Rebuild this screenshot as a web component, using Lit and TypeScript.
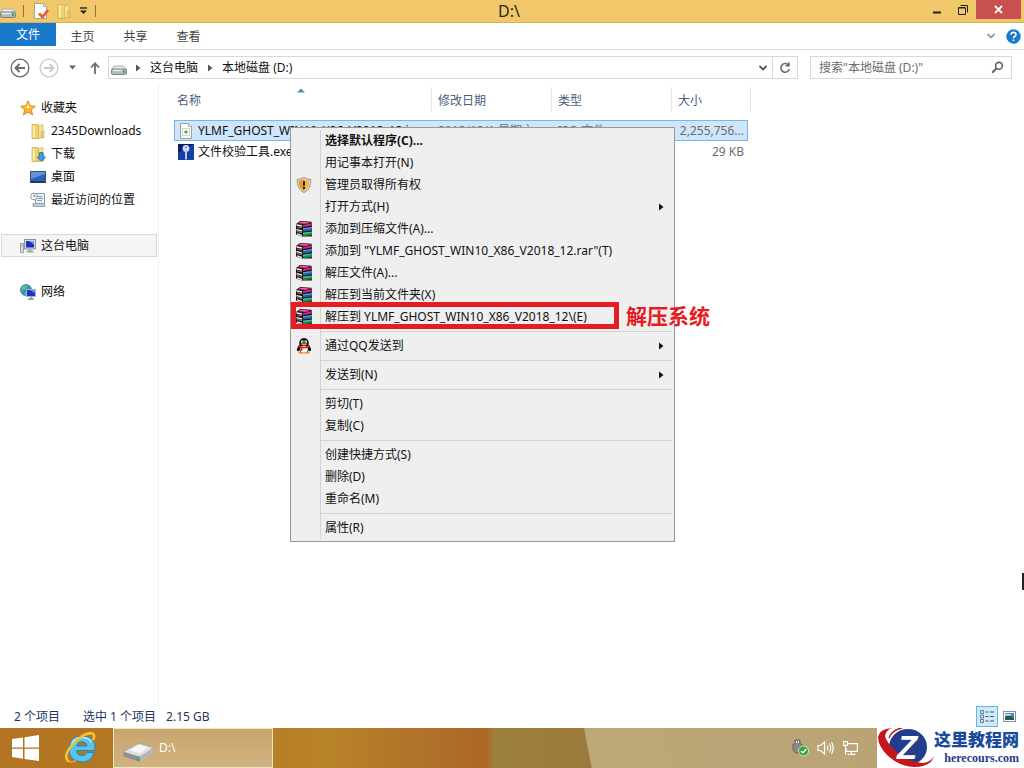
import { LitElement, html, css, svg, nothing } from "lit";
import { customElement } from "lit/decorators.js";
import { classMap } from "lit/directives/class-map.js";

const drive = svg`
  <path d="M3 6h9.500l3 3.500H.5z" fill="#e9eaeb" stroke="#a3a6a8" stroke-width=".8"/>
  <rect x=".5" y="9" width="15" height="5.500" rx="1.400" fill="#b5b9bc" stroke="#777b7e" stroke-width=".9"/>
  <path d="M2 10.500h9" stroke="#eef0f1" stroke-width="1.300"/>
  <rect x="12" y="10.500" width="2" height="2.500" fill="#2fae5a"/>`;
const folder = svg`
  <path d="M2 1.500h6l1 1.500v12.500H2z" fill="#f0d26c" stroke="#cda446" stroke-width=".7"/>
  <path d="M3.800 2.500v12" stroke="#fbeeb4" stroke-width="2"/>
  <path d="M8.500 3l4.500-1.500v12.200L8.500 15.500z" fill="#f8e394" stroke="#cfae54" stroke-width=".7"/>
  <path d="M11 8.500l3-.5v7h-3z" fill="#e9c862" stroke="#cda446" stroke-width=".5"/>`;
const monitor = svg`
  <rect x="4.500" y="1.500" width="11" height="9.500" fill="#d8dce2" stroke="#8a93a0"/>
  <rect x="6" y="3" width="8" height="6.500" fill="#1a31b8"/>
  <path d="M9 3h5v3.500z" fill="#7d9cf0"/>
  <path d="M8.500 11.500h3v1.500h2v1.500h-7V13h2z" fill="#9ba3ad"/>`;

const icons: Record<string, unknown> = {
  drive,
  folder,
  check: svg`
    <path d="M1.500.5h9l3 3v12h-12z" fill="#fff" stroke="#9a9a9a" stroke-width=".9"/>
    <path d="M10.500.5v3h3" fill="#e6e6e6" stroke="#9a9a9a" stroke-width=".8"/>
    <path d="M6 10.500l3.500 3.500L15 7" fill="none" stroke="#e0633c" stroke-width="2.800"/>`,
  star: svg`<path d="M8 .8l2.100 4.900 5.300.5-4 3.500 1.200 5.200L8 12.200l-4.600 2.700 1.200-5.200-4-3.500 5.300-.5z" fill="#fbb631" stroke="#dc8425" stroke-width=".9"/>
    <path d="M8 3l1.300 3.600 3 .5L8 8.500 5 6.900l1.700-.3z" fill="#ffe38b"/>`,
  download: svg`${folder}<path d="M9.500 6.500h3.500V11h2.500l-4.200 4.600L7 11h2.500z" fill="#3ba0e6" stroke="#1c6eb4" stroke-width=".8"/>`,
  desktop: svg`<rect x=".5" y="2.500" width="15" height="11" fill="#2b62b8" stroke="#3b4f6e"/>
    <path d="M1 3h14v2L1 10z" fill="#5e95dd"/><path d="M1 13h14" stroke="#1c2f50" stroke-width="1.500"/>`,
  recent: svg`<path d="M5.500 1.500h9v10h-9z" fill="#eef2f6" stroke="#8e9aa6"/>
    <path d="M7 4.500h5M8 6.500h5M7 8.500h5" stroke="#7b9cc0"/>
    <path d="M3 11.500h12v3H3z" fill="#c4ccd4" stroke="#8e9aa6" stroke-width=".8"/>
    <circle cx="4" cy="4.500" r="3.400" fill="#f6f8fa" stroke="#8c97a3"/><path d="M4 2.500v2h1.600" fill="none" stroke="#5c6670" stroke-width=".9"/>`,
  computer: svg`<rect x=".5" y="5.500" width="3" height="9" fill="#d5d9dd" stroke="#8d949b" stroke-width=".8"/>
    <path d="M1.500 7.500h1" stroke="#42a84d"/>${monitor}`,
  network: svg`<circle cx="6" cy="6" r="5.500" fill="#2f8fd4" stroke="#1f6ea9" stroke-width=".7"/>
    <path d="M2 3q3-3 6-1L6 5 3 6 1 8zM4 8l3 1-1 2.200z" fill="#69c06a"/>
    <rect x="6.500" y="5.500" width="9" height="7" fill="#1b37c0" stroke="#aab3c0"/><path d="M10 6h5v3z" fill="#6f93ee"/>
    <path d="M10 13h2v1.500H8.500v1h5v-1" fill="#9ba3ad" stroke="#858d98" stroke-width=".7"/>`,
  iso: svg`<path d="M2.500.5h8l3 3v12h-11z" fill="#fdfdfd" stroke="#9b9b9b"/><path d="M10.500.5v3h3" fill="#eee" stroke="#9b9b9b" stroke-width=".7"/>
    <rect x="4.500" y="5.500" width="7" height="7" fill="#fff" stroke="#c3cbc3" stroke-width=".8"/>
    <path d="M8 7.200v3.600M6.200 9h3.600" stroke="#3fa648" stroke-width="1.400"/>`,
  key: svg`<rect width="16" height="16" fill="#173fa6"/><path d="M0 0h16L0 9z" fill="#0a1c66"/>
    <circle cx="8" cy="4.500" r="3.400" fill="#cfdcff"/><circle cx="8" cy="3.400" r=".8" fill="#4c67bf"/>
    <path d="M7 7h2v8.500H7z" fill="#b7c8fb"/>`,
  shield: svg`<path d="M8 .5q3 1.800 6.800 1.800Q15.300 12 8 15.600.7 12 1.200 2.300 5 2.300 8 .5z" fill="#d9d9d4" stroke="#85857d" stroke-width=".8"/>
    <path d="M8 2.200q2.500 1.400 5.200 1.500Q13.200 11 8 13.900 2.800 11 2.800 3.700 5.500 3.600 8 2.200z" fill="#f5b431"/>
    <path d="M8 2.200v11.700Q2.800 11 2.800 3.700 5.500 3.600 8 2.200z" fill="#e89a20"/>
    <path d="M8 4.200v4.600M8 10v2" stroke="#2c1d08" stroke-width="2"/>`,
  rar: svg`<path d="M4 0l11.500.8.5 4.200-.5 1 .5 4-.5 1 .5 4.500H6L0 13.500V9.800l1-.8-1-1V4.800L1 4 0 3z" fill="#1d1418"/>
    <path d="M4 .5l11 .8-4 2.200L1.500 2.200z" fill="#c21f74"/><path d="M4.500 1l7 .6-2 .9-6-.8z" fill="#e974b2"/>
    <path d="M7 4.200l8.500-1.800v2.200L7 6z" fill="#d0258a"/>
    <path d="M1 3.200l5 1v1.500l-5-1z" fill="#f3efe6"/><path d="M1 5.400l5 1v.8L1 6.300z" fill="#a49d94"/>
    <path d="M7 7.200l8.500-1v3.300L7 10.500z" fill="#1b66b0"/><path d="M7 7.200l8.500-1v1L7 8.200z" fill="#62a9dd"/>
    <path d="M1 8l5 1.200v1.500L1 9.300z" fill="#f3efe6"/><path d="M1 10l5 1.300v.8L1 10.900z" fill="#a49d94"/>
    <path d="M7 11.800l8.500-1v3.500L7 15.200z" fill="#178a50"/><path d="M7 11.800l8.500-1v1L7 12.900z" fill="#5cc990"/>
    <path d="M1 12.300l5 1.400v1.500l-5-1.700z" fill="#f3efe6"/>`,
  qq: svg`<ellipse cx="3.200" cy="10" rx="1.700" ry="3.500" transform="rotate(28 3.200 10)" fill="#111"/>
    <ellipse cx="12.800" cy="10" rx="1.700" ry="3.500" transform="rotate(-28 12.800 10)" fill="#111"/>
    <ellipse cx="5.200" cy="14.700" rx="3" ry="1.200" fill="#f4a31c"/><ellipse cx="10.800" cy="14.700" rx="3" ry="1.200" fill="#f4a31c"/>
    <ellipse cx="8" cy="10" rx="5.300" ry="5" fill="#111"/><ellipse cx="8" cy="5" rx="4.800" ry="4.900" fill="#111"/>
    <ellipse cx="8" cy="11.200" rx="3.800" ry="3.500" fill="#fff"/>
    <ellipse cx="6.300" cy="3.900" rx="1.300" ry="1.700" fill="#fff"/><ellipse cx="9.700" cy="3.900" rx="1.300" ry="1.700" fill="#fff"/>
    <circle cx="6.700" cy="4.200" r=".6"/><circle cx="9.300" cy="4.200" r=".6"/>
    <ellipse cx="8" cy="6.400" rx="2.700" ry=".9" fill="#f7a71c"/>
    <path d="M3 7.600Q8 10 13 7.600l.2 1.900Q8 11.600 2.800 9.500z" fill="#e32222"/><path d="M4.500 9.800l2 .5-.2 2.600-1.800-.3z" fill="#e32222"/>`,
};

const icon = (name: string) =>
  html`<svg class="icon" viewBox="0 0 16 16" width="16" height="16" aria-hidden="true">${icons[name]}</svg>`;
const chevron = html`<svg width="10" height="8" viewBox="0 0 10 8" aria-hidden="true"><path d="M1.500 2L5 5.500 8.500 2" fill="none" stroke="currentColor" stroke-width="1.800"/></svg>`;
const triangle = html`<svg width="5" height="8" viewBox="0 0 5 8" aria-hidden="true"><path d="M0 .5L4.500 4 0 7.500z" fill="currentColor"/></svg>`;

interface MenuEntry {
  label: string;
  icon?: string;
  bold?: boolean;
  submenu?: boolean;
  note?: string;
}

const menuGroups: MenuEntry[][] = [
  [
    { label: "选择默认程序(C)...", bold: true },
    { label: "用记事本打开(N)" },
    { label: "管理员取得所有权", icon: "shield" },
    { label: "打开方式(H)", submenu: true },
    { label: "添加到压缩文件(A)...", icon: "rar" },
    { label: '添加到 "YLMF_GHOST_WIN10_X86_V2018_12.rar"(T)', icon: "rar" },
    { label: "解压文件(A)...", icon: "rar" },
    { label: "解压到当前文件夹(X)", icon: "rar" },
    { label: "解压到 YLMF_GHOST_WIN10_X86_V2018_12\\(E)", icon: "rar", note: "解压系统" },
  ],
  [{ label: "通过QQ发送到", icon: "qq", submenu: true }],
  [{ label: "发送到(N)", submenu: true }],
  [{ label: "剪切(T)" }, { label: "复制(C)" }],
  [{ label: "创建快捷方式(S)" }, { label: "删除(D)" }, { label: "重命名(M)" }],
  [{ label: "属性(R)" }],
];

const places = [
  [
    { label: "收藏夹", icon: "star" },
    { label: "2345Downloads", icon: "folder", child: true },
    { label: "下载", icon: "download", child: true },
    { label: "桌面", icon: "desktop", child: true },
    { label: "最近访问的位置", icon: "recent", child: true },
  ],
  [{ label: "这台电脑", icon: "computer", current: true }],
  [{ label: "网络", icon: "network" }],
] as { label: string; icon: string; child?: boolean; current?: boolean }[][];

const files = [
  { name: "YLMF_GHOST_WIN10_X86_V2018_12.iso", icon: "iso", date: "2018/12/1 星期六", type: "ISO 文件", size: "2,255,756...", selected: true },
  { name: "文件校验工具.exe", icon: "key", date: "2014/5/12 星期一", type: "应用程序", size: "29 KB", selected: false },
];

const shared = css`
  * { box-sizing: border-box; }
  button, input { font: inherit; color: inherit; border: 0; background: none; padding: 0; margin: 0; }
  a { color: inherit; text-decoration: none; }
  svg { display: block; flex: none; }
`;

@customElement("context-menu")
export class ContextMenu extends LitElement {
  static styles = [shared, css`
    :host { display: block; width: 385px; padding: 2px; border: 1px solid #979797; background: #efefef; color: #111; }
    .list { background: linear-gradient(#d2d2d2, #d2d2d2) 27px 0 / 1px 100% no-repeat; }
    .rule { height: 1px; margin: 3px 0 3px 28px; background: #d2d2d2; }
    .item { position: relative; display: flex; align-items: center; width: 100%; height: 22px; padding-left: 3px; text-align: left; white-space: nowrap; }
    .glyph { width: 29px; flex: none; }
    .label { flex: 1; }
    .bold { font-weight: 700; }
    .arrow { margin-right: 8px; }
    .mark { position: absolute; left: -2px; top: -4px; width: 328px; height: 27px; border: 5px solid #e51c23; }
    .note { position: absolute; left: 333px; top: -4px; font-size: 21px; line-height: 28px; font-weight: 700; color: #e51c23; }
  `];

  render() {
    return html`<div class="list" role="menu">
      ${menuGroups.map((group, i) => html`
        ${i ? html`<div class="rule" role="separator"></div>` : nothing}
        <div class="group" role="group">
          ${group.map((m) => html`<button class="item" role="menuitem">
            <span class="glyph">${m.icon ? icon(m.icon) : nothing}</span>
            <span class=${classMap({ label: true, bold: !!m.bold })}>${m.label}</span>
            ${m.submenu ? html`<span class="arrow">${triangle}</span>` : nothing}
            ${m.note ? html`<span class="mark"></span><span class="note">${m.note}</span>` : nothing}
          </button>`)}
        </div>`)}
    </div>`;
  }
}

@customElement("task-bar")
export class TaskBar extends LitElement {
  static styles = [shared, css`
    :host {
      display: flex; height: 40px; color: #fff;
      background:
        linear-gradient(79deg, transparent 57.3%, #bda878 57.4%, #bba475 75%, #b8a176 100%),
        linear-gradient(90deg, #b17423 0%, #b57c24 25%, #b9832a 32%, #b0732a 41%, #ad6726 47.500%, #9d803f 48.300%, #9c7a3b 58%);
    }
    .start, .ie { display: grid; place-items: center; }
    .start { width: 50px; }
    .ie { width: 62px; }
    .task { display: flex; align-items: center; gap: 5px; width: 160px; margin-left: 1px; padding: 0 8px; border: 1px solid #f3e4c6; background: linear-gradient(#c9a56c, #d0b382); }
    .tray { margin-left: auto; display: flex; align-items: center; gap: 8px; padding-right: 18px; }
    .brand { display: flex; align-items: center; background: #fff; color: #1b4c9b; padding-right: 5px; width: 147px; white-space: nowrap; }
    .words { display: grid; justify-items: end; margin-left: auto; }
    .cn { font-size: 17px; line-height: 20px; font-weight: 900; }
    .en { font: 700 12px/16px "Liberation Serif", serif; color: #233a86; }
    .zed { font: italic 700 33px "Liberation Sans", sans-serif; }
  `];

  render() {
    return html`
      <button class="start" aria-label="开始">
        <svg width="27" height="26" viewBox="0 0 27 26"><path d="M0 4l11-1.600v10H0zM12.500 2.200L27 0v12.400H12.500zM0 13.700h11v10L0 22.100zM12.500 13.700H27V26l-14.500-2.100z" fill="#fff"/></svg>
      </button>
      <button class="ie" aria-label="Internet Explorer">
        <svg width="32" height="32" viewBox="0 0 32 32">
          <path d="M29 20.500H22q-1.300 3-5 3-5.200 0-5.400-5H30Q31.300 4.500 17 4 4 4.500 4 17q.3 12.500 13 13 9.500 0 12-9.500zM11.700 14q.6-4 5.200-4.200 4.700.2 5.100 4.200z" fill="#55c4ee" stroke="#1884bd" stroke-width=".9"/>
          <path d="M7 11Q10 5 17 5.500q7 0 9.500 5" fill="none" stroke="#b7ecff" stroke-width="1.500"/>
          <path d="M4 29.500Q-3 25 7.500 12.500 18 1 26 1.200q5 .6 2 7" fill="none" stroke="#f6c32e" stroke-width="2.600"/>
          <path d="M4 29.500q2.500 1.500 7-1" fill="none" stroke="#e2a11b" stroke-width="2"/>
        </svg>
      </button>
      <button class="task">
        <svg width="32" height="32" viewBox="0 0 32 32">
          <path d="M1 20l14-8q2-.8 4-.3l11 3.300q1.500.8 0 2L18 25z" fill="#dfe1e3" stroke="#94979a" stroke-width=".7"/>
          <path d="M1 20l17 5v5L2 24.500z" fill="#8d9195"/><path d="M18 25l13-9v4.500L18 30z" fill="#b4b8bb"/>
          <path d="M8 18.500l9-5.500 9 2.500-8 5.500z" fill="#f7f8f9"/><path d="M16 25.500v3.500" stroke="#39b34a" stroke-width="2"/>
        </svg>
        <span>D:\\</span>
      </button>
      <div class="tray">
        <svg width="17" height="18" viewBox="0 0 17 18"><path d="M3 1h5v4h2v6l-3 3H4l-3-3V5h2z" fill="#8a8a86" stroke="#6c6859"/><path d="M4.500 2v2M6.500 2v2" stroke="#eee"/><circle cx="11.500" cy="12" r="5" fill="#2fa43b" stroke="#e9f5e6" stroke-width=".8"/><path d="M9 12l2 2 3.200-4" fill="none" stroke="#fff" stroke-width="1.500"/></svg>
        <svg width="17" height="16" viewBox="0 0 17 16" fill="none" stroke="#fff" stroke-width="1.200"><path d="M1 5.500h2.500L7.500 2v12l-4-3.500H1z"/><path d="M10 5.500q1.500 2.500 0 5M12.300 3.500q3 4.500 0 9M14.500 2q3.500 6 0 12"/></svg>
        <svg width="17" height="16" viewBox="0 0 17 16" fill="none" stroke="#fff" stroke-width="1.200"><path d="M6 3.600h9.400v7.800H4V8M9.500 11.500v3M5.500 14.400h8"/><path d="M1.600 1.600h3.800v3.800H1.600zM3.500 5.500v9"/></svg>
      </div>
      <div class="brand">
        <svg width="57" height="40" viewBox="0 0 57 40">
          <ellipse cx="31" cy="19" rx="19" ry="18" fill="#223d8c"/>
          <path d="M15 0Q2 1 1 9q0 9 10 19 11 10 26 11 17 0 20-11-3 6-11 7-14 0-27-12Q9 14 8 8q1-6 7-8z" fill="#c4161c"/>
          <path d="M25 0q-10 2-13 10" fill="none" stroke="#c4161c" stroke-width="1.500"/>
          <text class="zed" x="20" y="31" fill="#fff">Z</text>
        </svg>
        <div class="words"><span class="cn">这里教程网</span><span class="en">herecours.com</span></div>
      </div>`;
  }
}

@customElement("app-root")
export class AppRoot extends LitElement {
  static styles = [shared, css`
    :host {
      position: relative; display: flex; flex-direction: column; height: 100vh; overflow: hidden; background: #fff; color: #111;
      font: 12px/16px "Noto Sans", "Noto Sans CJK SC", sans-serif;
    }
    .title { display: grid; grid-template-columns: 1fr auto 1fr; height: 23px; background: #f0c869; border-bottom: 1px solid #d9b258; }
    .quick { display: flex; align-items: center; gap: 7px; }
    .quick .line { width: 1px; height: 12px; margin-right: 2px; background: #8d7440; }
    .caption { font-size: 16px; line-height: 22px; font-weight: 400; margin: 0; padding-right: 6px; color: #2c2415; }
    .controls { display: flex; justify-content: flex-end; padding-right: 3px; }
    .control { width: 26px; height: 19px; display: grid; place-items: center; }
    .close { width: 45px; background: #c8504f; }
    .ribbon { display: flex; height: 27px; border-bottom: 1px solid #dadbdc; color: #444; }
    .file { width: 56px; height: 23px; background: #1979ca; color: #fff; }
    .tab { width: 53px; height: 27px; }
    .ribbon-end { margin-left: auto; display: flex; align-items: center; gap: 10px; padding-right: 3px; color: #9a9a9a; }
    .nav { display: flex; align-items: center; height: 35px; padding: 0 12px 0 10px; color: #666; }
    .history { display: flex; align-items: center; width: 98px; flex: none; gap: 9px; }
    .address { flex: 1; display: flex; align-items: center; height: 23px; border: 1px solid #d9d9d9; padding-left: 2px; color: #111; }
    .crumb { padding: 0 10px 0 9px; }
    .address svg { color: #555; }
    .address .icon { margin-right: 9px; }
    .address .end { margin-left: auto; width: 19px; display: grid; place-items: center; }
    .refresh { width: 25px; height: 21px; border-left: 1px solid #d9d9d9; display: grid; place-items: center; }
    .search { display: flex; align-items: center; width: 202px; height: 23px; margin-left: 12px; border: 1px solid #d9d9d9; padding: 0 7px 0 8px; }
    .search input { flex: 1; min-width: 0; outline: 0; }
    .search input::placeholder { color: #6d6d6d; opacity: 1; }
    .body { flex: 1; display: flex; min-height: 0; }
    .side { width: 159px; flex: none; padding: 11px 1px 0; border-right: 1px solid #f0f0f0; }
    .places { list-style: none; margin: 0 0 23px; padding: 0; }
    .place { display: flex; align-items: center; gap: 5px; height: 23px; padding-left: 18px; border: 1px solid transparent; white-space: nowrap; }
    .child { padding-left: 28px; }
    .current { background: #f5f5f5; border-color: #d9d9d9; }
    .main { flex: 1; min-width: 0; padding-left: 15px; }
    .files { width: 574px; table-layout: fixed; border-collapse: collapse; }
    .files th { position: relative; height: 35px; padding: 8px 6px 0; text-align: left; vertical-align: top; font-weight: 400; color: #4c607a; }
    .files th:first-child { padding-left: 3px; }
    .files th::after { content: ""; position: absolute; right: 0; top: 2px; width: 1px; height: 24px; background: #e5e5e5; }
    .files th:last-child::after { right: -3px; }
    .name { width: 258px; } .mid { width: 120px; }
    .sort { position: absolute; left: 123px; top: 3px; }
    .files td { height: 21px; padding: 0 4px 0 6px; color: #6d6d6d; white-space: nowrap; overflow: hidden; }
    .files td:first-child { color: #111; padding-left: 4px; }
    .files td:last-child { text-align: right; padding-left: 0; }
    .cell { display: flex; align-items: center; gap: 4px; }
    .selected { background: #cde6fc; outline: 1px solid #7ab4ea; outline-offset: -1px; }
    .status { display: flex; align-items: center; height: 23px; padding: 0 4px 0 14px; color: #1f3563; }
    .count { padding-right: 23px; }
    .amount { padding-left: 10px; }
    .views { margin-left: auto; display: flex; }
    .view { width: 22px; height: 21px; display: grid; place-items: center; border: 1px solid transparent; }
    .on { background: #cdeaf8; border-color: #64b7dc; }
    .menu { position: absolute; left: 290px; top: 127px; }
    .caret { position: absolute; right: 0; top: 573px; width: 2px; height: 17px; background: #222; }
  `];

  render() {
    return html`
      <header class="title">
        <div class="quick">
          ${icon("drive")}<span class="line"></span>
          ${icon("check")}${icon("folder")}
          <svg width="9" height="8" viewBox="0 0 9 8"><path d="M1 1h7" stroke="#222" stroke-width="1.400"/><path d="M1 3.500h7L4.500 7z" fill="#222"/></svg>
          <span class="line"></span>
        </div>
        <h1 class="caption">D:\\</h1>
        <div class="controls">
          <button class="control" aria-label="最小化"><svg width="8" height="12" viewBox="0 0 8 12"><path d="M0 8.500h8" stroke="#222" stroke-width="2"/></svg></button>
          <button class="control" aria-label="还原"><svg width="10" height="10" viewBox="0 0 10 10" fill="none" stroke="#222"><path d="M.5 3h7v6.500h-7zM.5 2.500h7M2.500.5h7v7"/></svg></button>
          <button class="control close" aria-label="关闭"><svg width="9" height="9" viewBox="0 0 9 9"><path d="M1 1l7 7M8 1L1 8" stroke="#fff" stroke-width="1.800"/></svg></button>
        </div>
      </header>
      <nav class="ribbon">
        <button class="file">文件</button>
        <button class="tab">主页</button><button class="tab">共享</button><button class="tab">查看</button>
        <div class="ribbon-end">${chevron}
          <svg width="15" height="15" viewBox="0 0 15 15"><circle cx="7.500" cy="7.500" r="7.200" fill="#1979ca"/><path d="M5 5.600Q5.200 3.400 7.500 3.400T10 5.500Q10 6.700 8.600 7.500 7.500 8.100 7.500 9.300M7.500 10.500v1.600" fill="none" stroke="#fff" stroke-width="1.600"/></svg>
        </div>
      </nav>
      <div class="nav">
        <div class="history">
          <svg width="20" height="20" viewBox="0 0 20 20" fill="none" stroke="#6b6b6b"><circle cx="10" cy="10" r="8.900" stroke-width="1.300"/><path d="M15 10H6M9.500 6L5.500 10l4 4" stroke-width="1.900"/></svg>
          <svg width="20" height="20" viewBox="0 0 20 20" fill="none" stroke="#c9c9c9"><circle cx="10" cy="10" r="8.900" stroke-width="1.300"/><path d="M5 10h9M10.500 6l4 4-4 4" stroke-width="1.900"/></svg>
          <svg width="9" height="5" viewBox="0 0 9 5"><path d="M1 .5h7L4.500 4.500z" fill="#666"/></svg>
          <svg width="18" height="14" viewBox="0 0 18 14" fill="none" stroke="#6b6b6b" stroke-width="1.800"><path d="M9 13V2.500M5 6.500L9 2.200l4 4.300"/></svg>
        </div>
        <div class="address">
          ${icon("drive")}${triangle}<a class="crumb" href="#">这台电脑</a>${triangle}<a class="crumb" href="#">本地磁盘 (D:)</a>
          <button class="end" aria-label="历史记录">${chevron}</button>
          <button class="refresh" aria-label="刷新"><svg width="12" height="12" viewBox="0 0 12 12" fill="none" stroke="#666" stroke-width="1.500"><path d="M9.500 3.200A4.300 4.300 0 1 0 10.300 7"/><path d="M6.500 3.700h3.500V.3"/></svg></button>
        </div>
        <label class="search"><input type="text" aria-label="搜索" placeholder='搜索"本地磁盘 (D:)"' />
          <svg width="13" height="13" viewBox="0 0 13 13" fill="none" stroke="#666"><circle cx="8" cy="4.800" r="3.400" stroke-width="1.600"/><path d="M5.500 7.300L1.200 11.700" stroke-width="2"/></svg>
        </label>
      </div>
      <div class="body">
        <aside class="side">
          ${places.map((g) => html`<ul class="places">${g.map((p) => html`
            <li><a href="#" class=${classMap({ place: true, child: !!p.child, current: !!p.current })}>${icon(p.icon)}<span>${p.label}</span></a></li>`)}</ul>`)}
        </aside>
        <main class="main">
          <table class="files">
            <thead><tr>
              <th class="name">名称<svg class="sort" width="8" height="5" viewBox="0 0 8 5"><path d="M0 4.500L4 .5l4 4z" fill="#4b93a8"/></svg></th>
              <th class="mid">修改日期</th><th class="mid">类型</th><th>大小</th>
            </tr></thead>
            <tbody>${files.map((f) => html`<tr class=${classMap({ selected: f.selected })}>
              <td><span class="cell">${icon(f.icon)}${f.name}</span></td><td>${f.date}</td><td>${f.type}</td><td>${f.size}</td>
            </tr>`)}</tbody>
          </table>
        </main>
      </div>
      <footer class="status">
        <span class="count">2 个项目</span><span>选中 1 个项目</span><span class="amount">2.15 GB</span>
        <div class="views">
          <button class="view on" aria-label="详细信息"><svg width="16" height="15" viewBox="0 0 16 15" fill="none"><path d="M1.500 1.500h3v3h-3zM1.500 6h3v3h-3zM1.500 10.500h3v3h-3z" stroke="#6d7f92"/><path d="M6.500 3h3M11 3h4M6.500 7.500h3M11 7.500h4M6.500 12h3M11 12h4" stroke="#44566c"/></svg></button>
          <button class="view" aria-label="大图标"><svg width="13" height="11" viewBox="0 0 13 11"><rect x=".5" y=".5" width="12" height="10" fill="#fff" stroke="#7e95ab"/><path d="M2 2h9v7H2z" fill="#3f8cc4"/><path d="M2 6q4-3 9 1v2H2z" fill="#275d45"/><path d="M2 3h6v1.500H2z" fill="#d3ecf8"/></svg></button>
        </div>
      </footer>
      <task-bar></task-bar>
      <context-menu class="menu"></context-menu>
      <span class="caret"></span>`;
  }
}
